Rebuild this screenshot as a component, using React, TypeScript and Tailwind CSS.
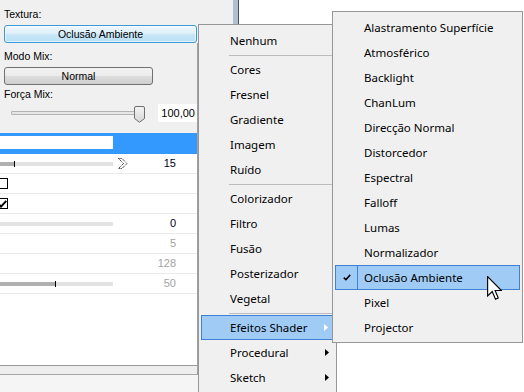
import React from 'react';

type Entry = { label: string; sub?: boolean; active?: boolean; checked?: boolean } | 'sep';

const effects: Entry[] = [
  { label: 'Nenhum' },
  'sep',
  { label: 'Cores' },
  { label: 'Fresnel' },
  { label: 'Gradiente' },
  { label: 'Imagem' },
  { label: 'Ruído' },
  'sep',
  { label: 'Colorizador' },
  { label: 'Filtro' },
  { label: 'Fusão' },
  { label: 'Posterizador' },
  { label: 'Vegetal' },
  'sep',
  { label: 'Efeitos Shader', sub: true, active: true },
  { label: 'Procedural', sub: true },
  { label: 'Sketch', sub: true },
];

const shaders: Entry[] = [
  { label: 'Alastramento Superfície' },
  { label: 'Atmosférico' },
  { label: 'Backlight' },
  { label: 'ChanLum' },
  { label: 'Direcção Normal' },
  { label: 'Distorcedor' },
  { label: 'Espectral' },
  { label: 'Falloff' },
  { label: 'Lumas' },
  { label: 'Normalizador' },
  { label: 'Oclusão Ambiente', active: true, checked: true },
  { label: 'Pixel' },
  { label: 'Projector' },
];

function SubArrow({ white }: { white?: boolean }) {
  return (
    <svg width="4" height="7" viewBox="0 0 4 7" className="ml-auto mr-[5px]">
      <path d="M0 0 L4 3.5 L0 7 Z" fill={white ? '#ffffff' : '#000000'} />
    </svg>
  );
}

function MenuList({ items }: { items: Entry[] }) {
  return (
    <>
      {items.map((it, i) => {
        if (it === 'sep') {
          return (
            <div key={i} className="h-[4px] flex items-center">
              <div className="ml-[28px] mr-[1px] flex-1 h-px bg-[#bcbcbc]" />
            </div>
          );
        }
        if (it.active) {
          return (
            <div
              key={i}
              className="relative h-[25px] flex items-center border border-[#3d80d4] bg-[#9fcbf5]"
            >
              {it.checked && (
                <div className="absolute left-[-1px] top-[-1px] w-[23px] h-[25px] border border-[#3d80d4] flex items-center justify-center">
                  <svg width="8" height="7" viewBox="0 0 8 7">
                    <path d="M0.8 3.6 L2.9 5.7 L7.2 0.9" stroke="#000" strokeWidth="1.6" fill="none" />
                  </svg>
                </div>
              )}
              <span className="pl-[28px]">{it.label}</span>
              {it.sub && <SubArrow white />}
            </div>
          );
        }
        return (
          <div key={i} className="h-[25px] flex items-center">
            <span className="pl-[29px]">{it.label}</span>
            {it.sub && <SubArrow />}
          </div>
        );
      })}
    </>
  );
}

function Track({ fill }: { fill?: number }) {
  return (
    <div className="relative w-[113px] h-[4px] bg-[#e3e3e3]">
      {fill !== undefined && (
        <>
          <div className="absolute left-0 top-0 h-[4px] bg-[#b0b0b0]" style={{ width: fill }} />
          <div className="absolute top-[-1px] h-[6px] w-px bg-black" style={{ left: fill }} />
        </>
      )}
    </div>
  );
}

function Row({ children, value, dim }: { children?: React.ReactNode; value?: string; dim?: boolean }) {
  return (
    <div className="h-[20px] flex items-center border-b border-[#ebebeb]">
      {children}
      {value && (
        <span className={`ml-auto pr-[21px] text-[11px] ${dim ? 'text-[#a3a3a3]' : 'text-[#000020]'}`}>{value}</span>
      )}
    </div>
  );
}

export default function App() {
  return (
    <div className="relative w-[524px] h-[392px] overflow-hidden bg-white flex font-['Liberation_Sans',Arial,sans-serif] text-[10.5px] text-black">
      <div className="w-[233px] shrink-0 bg-[#f0f0f0] flex flex-col">
        <div className="w-[198px] h-full flex flex-col">
          <div className="pl-1 pr-[1px] pt-2">
            <div className="h-[13px] leading-[13px]">Textura:</div>
            <div className="mt-1 w-[193px] h-[18px] rounded-[3px] border border-[#3a9ad8] bg-[linear-gradient(to_bottom,#eef7fd_0%,#dff1fb_45%,#c8e7f8_55%,#b9e0f5_100%)] shadow-[inset_0_0_0_1px_rgba(255,255,255,0.6)] flex items-center justify-center leading-none">
              Oclusão Ambiente
            </div>
          </div>
          <div className="flex-1 flex flex-col border-r border-[#a0a0a0]">
            <div className="h-[90px] pl-1 pt-[7px] flex flex-col">
              <div className="h-[13px] leading-[13px]">Modo Mix:</div>
              <div className="mt-1 w-[149px] h-[18px] rounded-[3px] border border-[#707070] bg-[linear-gradient(to_bottom,#f2f2f2_0%,#ebebeb_50%,#dddddd_50%,#cfcfcf_100%)] flex items-center justify-center leading-none">
                Normal
              </div>
              <div className="mt-[3px] h-[13px] leading-[13px]">Força Mix:</div>
              <div className="mt-[3px] h-[18px] flex items-center">
                <div className="relative w-[144px] h-[18px]">
                  <div className="absolute left-[7px] top-[7px] w-[131px] h-[4px] rounded-[1px] border border-[#b4b4b4] bg-[#e6e6e6]" />
                  <svg className="absolute left-[130px] top-[2px]" width="11" height="17" viewBox="0 0 11 17">
                    <defs>
                      <linearGradient id="th" x1="0" y1="0" x2="0" y2="1">
                        <stop offset="0" stopColor="#f4f4f4" />
                        <stop offset="1" stopColor="#d6d6d6" />
                      </linearGradient>
                    </defs>
                    <path d="M2 0.5 H9 Q10.5 0.5 10.5 2 V12.5 L5.5 16.3 L0.5 12.5 V2 Q0.5 0.5 2 0.5 Z" fill="url(#th)" stroke="#6f6f6f" />
                  </svg>
                </div>
                <div className="ml-auto w-[39px] h-[18px] bg-white flex items-center justify-end pr-[2px] text-[11px]">100,00</div>
              </div>
            </div>
            <div className="flex-1 bg-white flex flex-col">
              <div className="h-[21px] bg-[#3399ff] flex pt-[3px]">
                <div className="w-[113px] h-[13px] bg-white" />
              </div>
              <Row value="15">
                <Track fill={14} />
                <svg className="ml-[5px]" width="10" height="11" viewBox="0 0 10 11">
                  <path d="M0.5 0.5 H4 L9 5.5 L4 10.5 H0.5 L5.5 5.5 Z" fill="none" stroke="#000" strokeDasharray="1 1" />
                </svg>
              </Row>
              <Row>
                <div className="ml-[-3px] w-[11px] h-[11px] border border-black bg-white" />
              </Row>
              <Row>
                <div className="ml-[-3px] w-[11px] h-[11px] border border-black bg-white flex items-center justify-center">
                  <svg width="9" height="8" viewBox="0 0 9 8">
                    <path d="M0.5 4 L3 6.6 L8.3 0.8" stroke="#000" strokeWidth="2" fill="none" />
                  </svg>
                </div>
              </Row>
              <Row value="0">
                <Track />
              </Row>
              <Row value="5" dim />
              <Row value="128" dim />
              <Row value="50" dim>
                <Track fill={55} />
              </Row>
              <div className="flex-1" />
            </div>
            <div className="h-px bg-[#9a9a9a]" />
            <div className="h-[8px] bg-[#eeeeee]" />
            <div className="h-px bg-[#a8a8a8]" />
          </div>
          <div className="h-[17px] bg-[#f5f5f5]" />
        </div>
      </div>
      <div className="w-[6px] shrink-0 bg-[#afc0d3] border-r border-[#46525e]" />
      <div className="flex-1 bg-white" />

      <div className="absolute left-[198px] top-[24px] w-[139px] border border-[#979797] bg-[#f0f0f0] pt-[3px] pb-[2px] px-[2px] font-['Noto_Sans',sans-serif] text-[11.5px] text-black">
        <MenuList items={effects} />
      </div>

      <div className="absolute left-[332px] top-[11px] w-[191px] border border-[#979797] bg-[#f0f0f0] pt-[3px] pb-[2px] px-[2px] font-['Noto_Sans',sans-serif] text-[11.5px] text-black">
        <MenuList items={shaders} />
      </div>

      <svg className="absolute left-[487px] top-[276px]" width="15" height="25" viewBox="0 0 12 20">
        <path d="M0.5 0.5 V16 L4.2 12.4 L6.8 18.6 L9 17.6 L6.5 11.6 H11.5 Z" fill="#fff" stroke="#000" strokeWidth="0.9" strokeLinejoin="miter" />
      </svg>
    </div>
  );
}
